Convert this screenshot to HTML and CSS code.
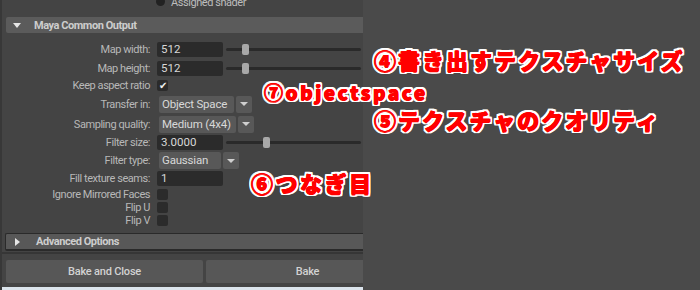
FILE: index.html
```html
<html>
  <head>
    <title>Texture Bake</title>
    <link rel="stylesheet" href="styles.css">
  </head>
  <body>
    <div class="screen">
      <div class="left">
        <div class="window">
          <div class="shader-row">
            <span class="radio"></span><span>Assigned shader</span>
          </div>
          <div class="section-head">
            <span class="tri-down"></span>Maya Common Output
          </div>
          <div class="form">
            <div class="row h19">
              <label>Map width:</label>
              <div class="ctl">
                <div class="field">512</div>
                <div class="slider"><span class="handle" style="left: 16px"></span></div>
              </div>
            </div>
            <div class="row h18">
              <label>Map height:</label>
              <div class="ctl">
                <div class="field">512</div>
                <div class="slider"><span class="handle" style="left: 16px"></span></div>
              </div>
            </div>
            <div class="row h16">
              <label>Keep aspect ratio</label>
              <div class="ctl"><span class="check on">&#10004;</span></div>
            </div>
            <div class="row h22">
              <label>Transfer in:</label>
              <div class="ctl">
                <div class="drop w75">Object Space</div><div class="drop-arrow"></div>
              </div>
            </div>
            <div class="row h18">
              <label>Sampling quality:</label>
              <div class="ctl">
                <div class="drop w77">Medium (4x4)</div><div class="drop-arrow"></div>
              </div>
            </div>
            <div class="row h18">
              <label>Filter size:</label>
              <div class="ctl">
                <div class="field">3.0000</div>
                <div class="slider"><span class="handle" style="left: 37px"></span></div>
              </div>
            </div>
            <div class="row h19">
              <label>Filter type:</label>
              <div class="ctl">
                <div class="drop w62">Gaussian</div><div class="drop-arrow"></div>
              </div>
            </div>
            <div class="row h17">
              <label>Fill texture seams:</label>
              <div class="ctl"><div class="field">1</div></div>
            </div>
            <div class="row h14">
              <label>Ignore Mirrored Faces</label>
              <div class="ctl"><span class="check"></span></div>
            </div>
            <div class="row h13">
              <label>Flip U</label>
              <div class="ctl"><span class="check"></span></div>
            </div>
            <div class="row h13">
              <label>Flip V</label>
              <div class="ctl"><span class="check"></span></div>
            </div>
          </div>
          <div class="section-head closed">
            <span class="tri-right"></span>Advanced Options
          </div>
        </div>
        <div class="buttons">
          <div class="btn w197">Bake and Close</div>
          <div class="btn w203">Bake</div>
        </div>
        <div class="strip"></div>
      </div>

      <div class="note n4">④書き出すテクスチャサイズ</div>
      <div class="note n7">⑦objectspace</div>
      <div class="note n5">⑤テクスチャのクオリティ</div>
      <div class="note n6">⑥つなぎ目</div>
    </div>
  </body>
</html>
```

FILE: styles.css
```css
body {
  margin: 0;
  background-color: #4a4a4a;
  font-family: Roboto, "Liberation Sans", sans-serif;
  font-size: 11px;
  letter-spacing: -0.45px;
  color: #b8b8b8;
}
.screen {
  position: relative;
  width: 700px;
  height: 290px;
  overflow: hidden;
}
.left {
  width: 361px;
  height: 290px;
  border-left: 2px solid #383838;
  background-color: #444444;
  overflow: hidden;
}
.window {
  padding-bottom: 1px;
  border-bottom: 2px solid #363636;
}
.shader-row {
  display: flex;
  align-items: center;
  gap: 6px;
  height: 12px;
  line-height: 12px;
  margin-top: -3px;
  padding-left: 154px;
  color: #bdbdbd;
}
.radio {
  width: 9px;
  height: 9px;
  border-radius: 50%;
  background-color: #222222;
  margin-top: -4px;
}
.section-head {
  display: flex;
  align-items: center;
  height: 16px;
  margin: 8px 0 0 4px;
  background-color: #5b5b5b;
  border-radius: 2px 0 0 2px;
  font-weight: 700;
  font-size: 11px;
  color: #cdcdcd;
}
.section-head.closed {
  height: 15px;
  margin-top: 6px;
  background-color: #585858;
  border: 1px solid #2a2a2a;
  border-bottom-width: 2px;
  border-right: none;
  margin-left: 3px;
  border-radius: 2px 0 0 2px;
}
.tri-down {
  width: 0;
  height: 0;
  margin: 0 13px 0 7px;
  border-left: 4px solid transparent;
  border-right: 4px solid transparent;
  border-top: 5px solid #e6e6e6;
}
.tri-right {
  width: 0;
  height: 0;
  margin: 0 16px 0 9px;
  border-top: 4px solid transparent;
  border-bottom: 4px solid transparent;
  border-left: 5px solid #e6e6e6;
}
.form {
  margin-top: 7px;
}
.row {
  display: grid;
  grid-template-columns: 148px 1fr;
  column-gap: 7px;
  align-items: center;
}
.row label {
  text-align: right;
  white-space: nowrap;
}
.h13 { height: 13px; }
.h14 { height: 14px; }
.h16 { height: 16px; }
.h17 { height: 17px; }
.h18 { height: 18px; }
.h19 { height: 19px; }
.h22 { height: 22px; }
.ctl {
  display: flex;
  align-items: center;
}
.field {
  width: 62px;
  height: 15px;
  line-height: 15px;
  padding-left: 4px;
  background-color: #2b2b2b;
  border-radius: 2px;
  color: #d8d8d8;
  font-size: 11.5px;
  letter-spacing: 0;
}
.slider {
  position: relative;
  width: 135px;
  height: 3px;
  margin-left: 3px;
  background-color: #2a2a2a;
  border-radius: 2px;
}
.handle {
  position: absolute;
  top: -4px;
  width: 7px;
  height: 11px;
  background-color: #a8a8a8;
  border-radius: 2px;
}
.check {
  width: 11px;
  height: 11px;
  background-color: #2b2b2b;
  border-radius: 2px;
  color: #f0f0f0;
  font-size: 10px;
  line-height: 11px;
  text-align: center;
}
.drop {
  height: 17px;
  line-height: 17px;
  margin-left: 2px;
  padding-left: 3px;
  background-color: #585858;
  border-radius: 2px;
  color: #d8d8d8;
  font-size: 11.5px;
  letter-spacing: -0.2px;
  box-sizing: border-box;
}
.w62 { width: 62px; }
.w75 { width: 75px; }
.w77 { width: 77px; }
.drop-arrow {
  display: flex;
  align-items: center;
  justify-content: center;
  width: 16px;
  height: 17px;
  margin-left: 2px;
  background-color: #585858;
  border-radius: 2px;
}
.drop-arrow::after {
  content: "";
  border-left: 4px solid transparent;
  border-right: 4px solid transparent;
  border-top: 4px solid #cfcfcf;
}
.buttons {
  display: flex;
  gap: 3px;
  margin: 6px 0 0 4px;
  width: 420px;
}
.btn {
  height: 23px;
  line-height: 23px;
  text-align: center;
  background-color: #575757;
  border-radius: 2px;
  color: #d2d2d2;
  font-weight: 500;
  font-size: 11px;
  letter-spacing: -0.2px;
}
.w197 { width: 197px; }
.w203 { width: 203px; }
.strip {
  height: 4px;
  margin-top: 4px;
  margin-left: -2px;
  width: 363px;
  background-color: #dbe4ec;
}
.note {
  position: absolute;
  font-family: "Noto Sans CJK JP", sans-serif;
  font-weight: 900;
  color: #ff0000;
  white-space: nowrap;
  line-height: 24px;
  text-shadow:
    0.6px 0 0 #ff0000, -0.4px 0 0 #ff0000, 0 0.5px 0 #ff0000,
    2px 0 0 #fff, -2px 0 0 #fff, 0 2px 0 #fff, 0 -2px 0 #fff,
    2px 2px 0 #fff, -2px 2px 0 #fff, 2px -2px 0 #fff, -2px -2px 0 #fff,
    1px 2px 0 #fff, -1px 2px 0 #fff, 1px -2px 0 #fff, -1px -2px 0 #fff,
    2px 1px 0 #fff, -2px 1px 0 #fff, 2px -1px 0 #fff, -2px -1px 0 #fff,
    0 0 3px #555;
}
.n4 {
  left: 374px;
  top: 47px;
  font-size: 22px;
  letter-spacing: 2px;
}
.n5 {
  left: 374px;
  top: 107px;
  font-size: 22px;
  letter-spacing: 2px;
}
.n6 {
  left: 251px;
  top: 170px;
  font-size: 22px;
  letter-spacing: 2.5px;
}
.n7 {
  left: 264px;
  top: 80px;
  font-size: 19px;
  letter-spacing: 2.5px;
}
```
